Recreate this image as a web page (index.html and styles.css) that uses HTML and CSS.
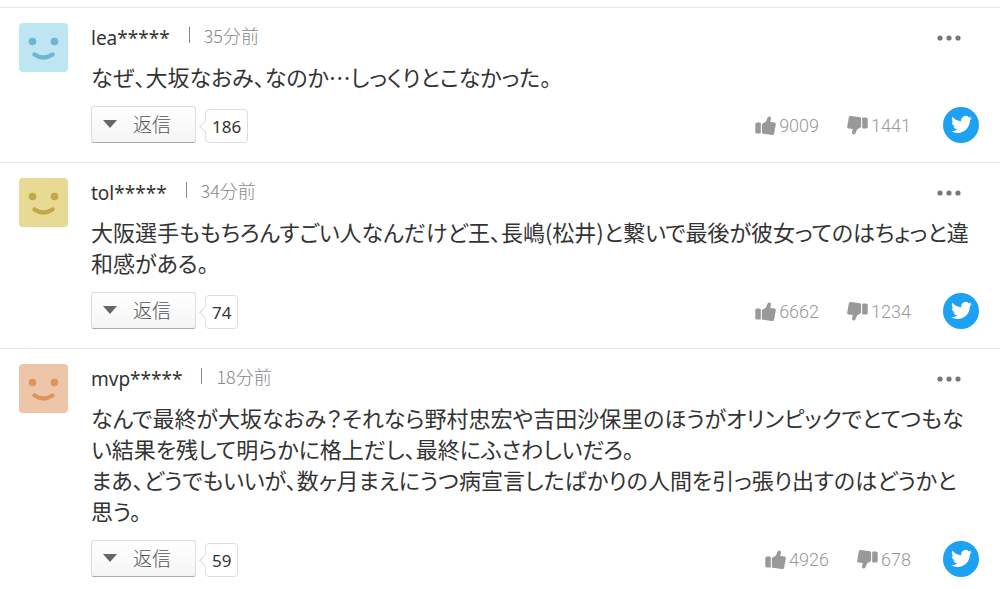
FILE: index.html
```
<!DOCTYPE html>
<html lang="ja">

<head>
    <meta charset="UTF-8">
    <meta name="viewport" content="width=device-width, initial-scale=1.0">
    <title>コメント</title>
    <link rel="stylesheet" href="styles.css">
</head>

<body>
    <!-- shared icons -->
    <svg class="sprite" aria-hidden="true">
        <symbol id="face" viewBox="0 0 49 49">
            <circle cx="13.500" cy="18.500" r="3.800" fill="currentColor" />
            <circle cx="35.500" cy="18.500" r="3.800" fill="currentColor" />
            <path d="M15.500 31.500Q24.500 37.500 33.500 31.500" fill="none" stroke="currentColor" stroke-width="4.500" stroke-linecap="round" />
        </symbol>
        <symbol id="thumb" viewBox="0 0 21 19">
            <path d="M2 6.500H4.800Q5.800 6.500 5.800 7.500V16.500Q5.800 17.500 4.800 17.500H2Q.3 17.500 .3 16V8Q.3 6.500 2 6.500Z" />
            <path d="M6.900 8L11 5.500L12.500 1.800Q13.300 .2 14.800 .5Q16.300 1 15.900 3L15.200 6L19.500 6.500Q21 6.800 20.800 8.300L19.200 17.500Q18.800 19.300 17 19L8 17.800Q6.900 17.600 6.900 16.600Z" />
        </symbol>
        <symbol id="bird" viewBox="0 0 24 24">
            <path d="M23.953 4.570a10 10 0 0 1-2.825.775 4.958 4.958 0 0 0 2.163-2.723c-.951.555-2.005.959-3.127 1.184a4.920 4.920 0 0 0-8.384 4.482C7.690 8.095 4.067 6.130 1.640 3.162a4.822 4.822 0 0 0-.666 2.475c0 1.710.870 3.213 2.188 4.096a4.904 4.904 0 0 1-2.228-.616v.060a4.923 4.923 0 0 0 3.946 4.827 4.996 4.996 0 0 1-2.212.085 4.936 4.936 0 0 0 4.604 3.417 9.867 9.867 0 0 1-6.102 2.105c-.390 0-.779-.023-1.170-.067a13.995 13.995 0 0 0 7.557 2.209c9.053 0 13.998-7.496 13.998-13.985 0-.210 0-.420-.015-.630A9.935 9.935 0 0 0 24 4.590z" />
        </symbol>
        <symbol id="dots" viewBox="0 0 24 6">
            <circle cx="3" cy="3" r="2.600" />
            <circle cx="12" cy="3" r="2.600" />
            <circle cx="21" cy="3" r="2.600" />
        </symbol>
    </svg>

    <ul class="comments">
        <li class="comment">
            <svg class="avatar blue"><use href="#face" /></svg>
            <div class="body">
                <div class="head">
                    <span class="name">lea*****</span>
                    <span class="time">35分前</span>
                    <button class="more" aria-label="メニュー"><svg><use href="#dots" /></svg></button>
                </div>
                <p class="text">なぜ、大坂なおみ、なのか…しっくりとこなかった。</p>
                <div class="foot">
                    <button class="reply">返信</button>
                    <span class="count">186</span>
                    <button class="vote good" aria-label="そう思う 9009"><svg><use href="#thumb" /></svg>9009</button>
                    <button class="vote bad" aria-label="そう思わない 1441"><svg><use href="#thumb" /></svg>1441</button>
                    <a class="twitter" href="#" aria-label="ツイート"><svg><use href="#bird" /></svg></a>
                </div>
            </div>
        </li>
        <li class="comment">
            <svg class="avatar yellow"><use href="#face" /></svg>
            <div class="body">
                <div class="head">
                    <span class="name">tol*****</span>
                    <span class="time">34分前</span>
                    <button class="more" aria-label="メニュー"><svg><use href="#dots" /></svg></button>
                </div>
                <p class="text">大阪選手ももちろんすごい人なんだけど王、長嶋(松井)と繋いで最後が彼女ってのはちょっと違和感がある。</p>
                <div class="foot">
                    <button class="reply">返信</button>
                    <span class="count">74</span>
                    <button class="vote good" aria-label="そう思う 6662"><svg><use href="#thumb" /></svg>6662</button>
                    <button class="vote bad" aria-label="そう思わない 1234"><svg><use href="#thumb" /></svg>1234</button>
                    <a class="twitter" href="#" aria-label="ツイート"><svg><use href="#bird" /></svg></a>
                </div>
            </div>
        </li>
        <li class="comment">
            <svg class="avatar orange"><use href="#face" /></svg>
            <div class="body">
                <div class="head">
                    <span class="name">mvp*****</span>
                    <span class="time">18分前</span>
                    <button class="more" aria-label="メニュー"><svg><use href="#dots" /></svg></button>
                </div>
                <p class="text">なんで最終が大坂なおみ？それなら野村忠宏や吉田沙保里のほうがオリンピックでとてつもない結果を残して明らかに格上だし、最終にふさわしいだろ。<br>まあ、どうでもいいが、数ヶ月まえにうつ病宣言したばかりの人間を引っ張り出すのはどうかと思う。</p>
                <div class="foot">
                    <button class="reply">返信</button>
                    <span class="count">59</span>
                    <button class="vote good" aria-label="そう思う 4926"><svg><use href="#thumb" /></svg>4926</button>
                    <button class="vote bad" aria-label="そう思わない 678"><svg><use href="#thumb" /></svg>678</button>
                    <a class="twitter" href="#" aria-label="ツイート"><svg><use href="#bird" /></svg></a>
                </div>
            </div>
        </li>
    </ul>
</body>

</html>
```
FILE: styles.css
```
* {
    box-sizing: border-box;
}

body {
    margin: 0;
    padding-top: 7px;
    background: #fff;
    color: #333;
    font-family: "Noto Sans CJK JP", sans-serif;
}

button {
    margin: 0;
    padding: 0;
    border: none;
    background: none;
    font-family: inherit;
    cursor: pointer;
}

.sprite {
    display: none;
}

.comments {
    margin: 0;
    padding: 0;
    list-style: none;
}

.comment {
    display: flex;
    gap: 23px;
    padding: 15px 21px 19px 19px;
    border-top: 1px solid #e6e6e6;
}

.avatar {
    flex: none;
    width: 49px;
    height: 49px;
    border-radius: 4px;
}

.blue {
    background: #bde6f2;
    color: #6bb7d1;
}

.yellow {
    background: #e8d994;
    color: #c1a748;
}

.orange {
    background: #edc6aa;
    color: #dd9560;
}

.body {
    flex: 1;
    min-width: 0;
}

.head {
    display: flex;
    align-items: center;
    height: 30px;
    margin-bottom: 8px;
}

.name {
    font-family: "Noto Sans", sans-serif;
    font-size: 19px;
    line-height: 30px;
    color: #333;
}

.time {
    margin-bottom: 6px;
    margin-left: 19px;
    padding-left: 14px;
    border-left: 1px solid #888;
    font-size: 18px;
    font-weight: 300;
    line-height: 16px;
    color: #888;
}

.more {
    margin-left: auto;
    margin-right: 18px;
}

.more svg {
    display: block;
    width: 24px;
    height: 6px;
    fill: #777;
}

.text {
    margin: 0 0 14px;
    padding-right: 6px;
    font-size: 22px;
    line-height: 31px;
    font-feature-settings: "palt";
}

.foot {
    display: flex;
    align-items: center;
    height: 37px;
}

.reply {
    display: flex;
    align-items: center;
    gap: 16px;
    width: 105px;
    height: 37px;
    padding: 0 0 2px 11px;
    border: 1px solid #ddd;
    border-bottom-color: #aaa;
    border-radius: 3px;
    background: linear-gradient(#fff, #f5f5f5);
    font-size: 19px;
    font-weight: 300;
    color: #555;
}

.reply::before {
    content: "";
    border: 7px solid transparent;
    border-top: 8px solid #666;
    border-bottom: none;
}

.count {
    position: relative;
    align-self: flex-end;
    margin-left: 9px;
    padding: 2px 6px 0;
    border: 1px solid #ddd;
    border-radius: 4px;
    font-family: "Noto Sans", sans-serif;
    font-size: 17px;
    line-height: 30px;
}

/* pointer of the bubble */
.count::before {
    content: "";
    position: absolute;
    left: -5px;
    top: 12px;
    width: 8px;
    height: 8px;
    border: 1px solid #ddd;
    border-top: none;
    border-right: none;
    background: #fff;
    transform: rotate(45deg);
}

.vote {
    display: flex;
    align-items: center;
    gap: 3px;
    padding-top: 2px;
    font-family: Roboto, sans-serif;
    font-size: 18px;
    font-weight: 300;
    color: #999;
}

.vote svg {
    width: 21px;
    height: 19px;
    fill: #999;
}

.good {
    margin-left: auto;
}

.bad {
    margin-left: 28px;
}

.bad svg {
    transform: rotate(180deg);
}

.twitter {
    display: flex;
    align-items: center;
    justify-content: center;
    width: 36px;
    height: 36px;
    margin-left: 32px;
    border-radius: 50%;
    background: #1da1f2;
}

.twitter svg {
    width: 21px;
    height: 21px;
    fill: #fff;
}
```
